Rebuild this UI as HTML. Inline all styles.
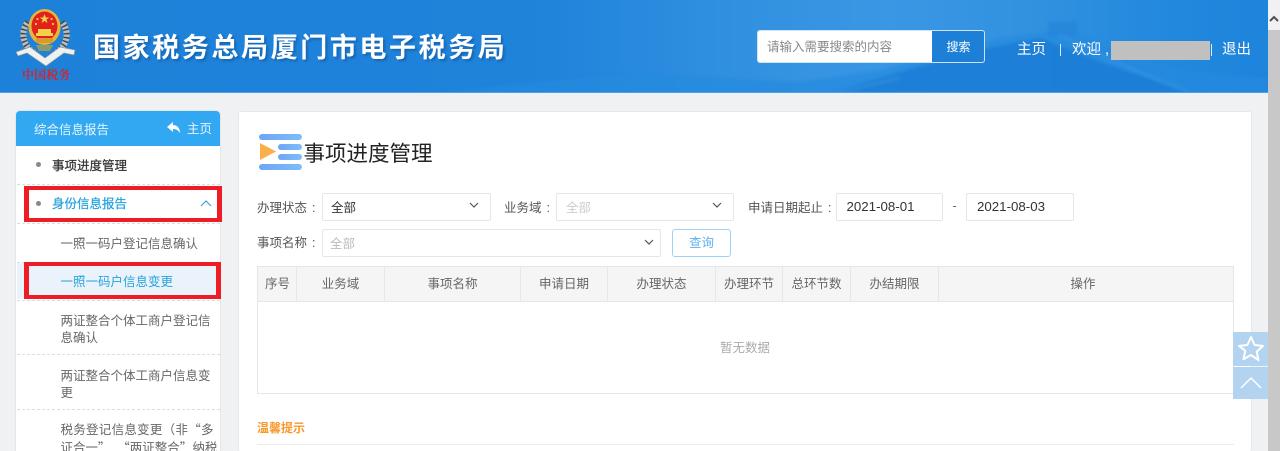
<!DOCTYPE html>
<html lang="zh"><head><meta charset="utf-8"><title>事项进度管理</title>
<style>
html,body{margin:0;padding:0;width:1280px;height:451px;overflow:hidden;background:#eff1f3}
body{position:relative;font-family:"Liberation Sans","Noto Sans CJK SC",sans-serif;font-size:12.5px;color:#555;filter:blur(.3px)}
.a{position:absolute;white-space:nowrap}
.box{position:absolute;box-sizing:border-box;background:#fff;border:1px solid #e6e6e6;border-radius:2px}
.th{position:absolute;top:267px;height:34px;line-height:34px;text-align:center;color:#666;border-right:1px solid #e6e6e6;box-sizing:border-box}
.dash{position:absolute;left:17px;width:203px;border-top:1px dashed #ddd}
.m{position:absolute;left:60.500px;width:153px;line-height:17px;color:#666;white-space:normal}
.c{margin-left:5px}
.q{font-family:"Noto Sans CJK SC",sans-serif}
.b{color:#333;-webkit-text-stroke:.25px currentColor}
</style></head><body>

<!-- header -->
<div class="a" style="left:0;top:0;width:1268px;height:93px;background:linear-gradient(90deg,#1e81d9 0,#1f83da 42%,#3190e0 58%,#3a97e4 70%,#3191e0 82%,#2088dd 93%,#1e84dc 100%);overflow:hidden">
<svg width="1268" height="93" style="position:absolute;left:0;top:0;filter:blur(1.500px)">
<path d="M440 93 L500 86 L560 80 L640 74 L720 78 L800 82 L880 70 L960 50 L1000 38 L1050 32 L1080 34 L1120 50 L1180 70 L1268 78 V93Z" fill="#258ade" opacity=".7"/>
<path d="M830 93 L900 72 L980 50 L1040 38 L1100 62 L1190 93Z" fill="#1a7cd4" opacity=".8"/>
<path d="M1048 22h29v14h-29z" fill="#2585d9" opacity=".8"/>
<path d="M1058 34 L1110 60 L1190 93" stroke="#3b98e4" stroke-width="3" fill="none" opacity=".55"/>
<path d="M836 93 L900 78" stroke="#3b98e4" stroke-width="3" fill="none" opacity=".5"/>
</svg></div>
<div class="a" style="left:0;top:92px;width:1268px;height:1px;background:#4ba0e6"></div>

<!-- emblem -->
<svg class="a" style="left:0;top:0" width="90" height="70" viewBox="0 0 90 70">
<path d="M28 22 C20 32 22 46 36 54" fill="none" stroke="#b7bec3" stroke-width="6"/>
<path d="M28 22 C20 32 22 46 36 54" fill="none" stroke="#3c4a4c" stroke-width="6" stroke-dasharray="1.500 2.500"/>
<path d="M62 22 C70 32 68 46 54 54" fill="none" stroke="#b7bec3" stroke-width="6"/>
<path d="M62 22 C70 32 68 46 54 54" fill="none" stroke="#3c4a4c" stroke-width="6" stroke-dasharray="1.500 2.500"/>
<ellipse cx="44.500" cy="27" rx="16" ry="18" fill="#e6b53c"/>
<ellipse cx="44.500" cy="26" rx="13" ry="14.500" fill="#e2201c"/>
<path d="M44.500 14l1.300 3.500h3.500l-2.900 2.100 1.100 3.500-3-2.200-3 2.200 1.100-3.500-2.900-2.100h3.500z" fill="#f4d04a"/>
<circle cx="37.500" cy="19" r="1.100" fill="#f4d04a"/><circle cx="51.500" cy="19" r="1.100" fill="#f4d04a"/><circle cx="36" cy="24" r="1.100" fill="#f4d04a"/><circle cx="53" cy="24" r="1.100" fill="#f4d04a"/>
<path d="M36 36h17v-3h-2v-4h-13v4h-2z" fill="#f4d04a"/>
<rect x="36" y="38" width="17" height="5" rx="1" fill="#d89a2c"/>
<path d="M36 45h17l-3 6h-11z" fill="#8c9a6a"/>
<path d="M16 52 L30 47 L45 58 L60 47 L75 50 L74 55 L64 53 L46 66 L27 53 L18 56Z" fill="#eef1f1" stroke="#8a9499" stroke-width=".7"/>
</svg>
<div class="a" style="left:22px;top:67px;font:bold 12px/16px 'Noto Serif CJK SC',serif;color:#d4232b;letter-spacing:.1px">中国税务</div>

<div class="a" style="left:93px;top:28px;font-size:27px;line-height:40px;font-weight:bold;color:#fff;letter-spacing:2.600px;text-shadow:2px 2px 2px rgba(10,60,120,.4)">国家税务总局厦门市电子税务局</div>

<!-- search -->
<div class="a" style="left:757px;top:30px;width:228px;height:33px;box-sizing:border-box;border:1px solid #cfe4f7;border-radius:3px;background:#fff;overflow:hidden">
<div class="a" style="left:9px;top:0;line-height:33px;color:#888">请输入需要搜索的内容</div>
<div class="a" style="left:174px;top:0;width:53px;height:32px;background:#1e7fd6;color:#fff;text-align:center;line-height:33px;font-size:12px">搜索</div></div>
<div class="a" style="left:1017px;top:41px;color:#fff;font-size:14.500px;line-height:18px">主页</div>
<div class="a" style="left:1060px;top:44px;width:1px;height:12px;background:#dcecfa"></div>
<div class="a" style="left:1072px;top:41px;color:#fff;font-size:14.500px;line-height:18px">欢迎 ,</div>
<div class="a" style="left:1111px;top:41px;width:99px;height:19px;background:#c0c0c0"></div>
<div class="a" style="left:1211px;top:44px;width:1px;height:12px;background:#dcecfa"></div>
<div class="a" style="left:1222px;top:41px;color:#fff;font-size:14.500px;line-height:18px">退出</div>

<!-- scrollbar -->
<div class="a" style="left:1268px;top:0;width:12px;height:451px;background:#c8c8c8"></div>
<div class="a" style="left:1268px;top:0;width:12px;height:30px;background:#f1f1f1"></div>
<svg class="a" style="left:1268px;top:12px" width="12" height="12"><path d="M2 9L6 5l4 4" stroke="#505050" stroke-width="2" fill="none"/></svg>

<!-- sidebar -->
<div class="a" style="left:16px;top:111px;width:204px;height:340px;background:#fff;box-shadow:0 0 0 1px #e4e7ea;border-radius:4px 4px 0 0"></div>
<div class="a" style="left:16px;top:111px;width:204px;height:35px;background:#33a8f2;border-radius:4px 4px 0 0"></div>
<div class="a" style="left:34px;top:112px;line-height:36px;color:#e8f5fe">综合信息报告</div>
<svg class="a" style="left:167px;top:122px" width="14" height="12"><path d="M6 0L0 5l6 5V7c3 0 5 1 7 4 0-5-3-8-7-8z" fill="#fff"/></svg>
<div class="a" style="left:187px;top:112px;line-height:35px;color:#e8f5fe">主页</div>

<div class="a" style="left:36px;top:162px;width:5px;height:5px;border-radius:50%;background:#888"></div>
<div class="a b" style="left:52px;top:157px;line-height:18px;color:#333">事项进度管理</div>
<div class="dash" style="top:184px"></div>
<div class="a" style="left:36px;top:201px;width:5px;height:5px;border-radius:50%;background:#888"></div>
<div class="a b" style="left:52px;top:195px;line-height:18px;color:#27a3dc">身份信息报告</div>
<svg class="a" style="left:199px;top:198px" width="14" height="10"><path d="M2 8l5-5 5 5" stroke="#3aa7dc" stroke-width="1.200" fill="none"/></svg>
<div class="dash" style="top:223px"></div>
<div class="m" style="top:236px">一照一码户登记信息确认</div>
<div class="dash" style="top:262px"></div>
<div class="a" style="left:17px;top:263px;width:203px;height:36px;background:#eaf3fb"></div>
<div class="m" style="top:274px;color:#27a3dc">一照一码户信息变更</div>
<div class="dash" style="top:300px"></div>
<div class="m" style="top:313px">两证整合个体工商户登记信息确认</div>
<div class="dash" style="top:354px"></div>
<div class="m" style="top:368px">两证整合个体工商户信息变更</div>
<div class="dash" style="top:409px"></div>
<div class="m" style="top:421px;line-height:16.500px"><div style="text-align:justify;text-align-last:justify;white-space:nowrap">税务登记信息变更<span class="q">（</span>非<span class="q">“</span>多</div><div style="white-space:nowrap">证合一<span class="q">”</span><span class="q" style="margin-left:13px">“</span>两证整合<span class="q">”</span>纳税</div></div>

<!-- red boxes -->
<div class="a" style="left:24px;top:186px;width:198px;height:36px;box-sizing:border-box;border:4px solid #ee1c25;border-width:4px 5px"></div>
<div class="a" style="left:24px;top:262px;width:197px;height:37px;box-sizing:border-box;border:4px solid #ee1c25;border-width:4px 5px"></div>

<!-- main -->
<div class="a" style="left:239px;top:112px;width:1012px;height:339px;background:#fff;box-shadow:0 0 0 1px #e6e8eb;border-radius:2px"></div>

<svg class="a" style="left:258px;top:133px" width="45" height="38">
<defs><linearGradient id="b" x1="0" x2="1"><stop offset="0" stop-color="#6ea5f5"/><stop offset="1" stop-color="#7fbcfb"/></linearGradient></defs>
<rect x="1" y="1" width="43" height="6" rx="3" fill="url(#b)"/>
<rect x="20" y="11" width="24" height="6" rx="3" fill="url(#b)"/>
<rect x="20" y="21" width="24" height="6" rx="3" fill="url(#b)"/>
<rect x="1" y="31" width="43" height="6" rx="3" fill="url(#b)"/>
<path d="M2 10L18 18.500 2 27Z" fill="#f9b04a"/></svg>
<div class="a" style="left:303.500px;top:139px;font-size:21.500px;line-height:30px;color:#222">事项进度管理</div>

<div class="a" style="left:257px;top:199px;line-height:18px">办理状态<span class="c">:</span></div>
<div class="box" style="left:322px;top:193px;width:169px;height:28px"></div>
<div class="a" style="left:331px;top:199px;line-height:18px;color:#333">全部</div>
<svg class="a" style="left:469px;top:202px" width="10" height="7"><path d="M1 1l4 4 4-4" stroke="#555" stroke-width="1.200" fill="none"/></svg>

<div class="a" style="left:504px;top:199px;line-height:18px">业务域<span class="c">:</span></div>
<div class="box" style="left:556px;top:193px;width:178px;height:28px"></div>
<div class="a" style="left:566px;top:199px;line-height:18px;color:#ccc">全部</div>
<svg class="a" style="left:712px;top:202px" width="10" height="7"><path d="M1 1l4 4 4-4" stroke="#555" stroke-width="1.200" fill="none"/></svg>

<div class="a" style="left:748px;top:199px;line-height:18px">申请日期起止<span class="c">:</span></div>
<div class="box" style="left:836px;top:193px;width:107px;height:28px"></div>
<div class="a" style="left:846.500px;top:198px;line-height:18px;color:#333;font-size:13.300px">2021-08-01</div>
<div class="a" style="left:952.500px;top:198px;line-height:16px;color:#666">-</div>
<div class="box" style="left:966px;top:193px;width:108px;height:28px"></div>
<div class="a" style="left:977px;top:198px;line-height:18px;color:#333;font-size:13.300px">2021-08-03</div>

<div class="a" style="left:257px;top:234px;line-height:18px">事项名称<span class="c">:</span></div>
<div class="box" style="left:322px;top:229px;width:339px;height:28px"></div>
<div class="a" style="left:330px;top:235px;line-height:18px;color:#bbb">全部</div>
<svg class="a" style="left:644px;top:239px" width="10" height="7"><path d="M1 1l4 4 4-4" stroke="#555" stroke-width="1.200" fill="none"/></svg>
<div class="a" style="left:672px;top:229px;width:59px;height:28px;box-sizing:border-box;border:1px solid #9fd0f6;border-radius:3px;text-align:center;line-height:26px;color:#5fb2ee">查询</div>

<!-- table -->
<div class="a" style="left:257px;top:266px;width:977px;height:128px;box-sizing:border-box;border:1px solid #e6e6e6;background:#fff"></div>
<div class="a" style="left:258px;top:267px;width:975px;height:34px;background:#f5f5f5;border-bottom:1px solid #e6e6e6"></div>
<div class="th" style="left:258px;width:39px;padding-left:1px">序号</div>
<div class="th" style="left:297px;width:88px">业务域</div>
<div class="th" style="left:385px;width:136px">事项名称</div>
<div class="th" style="left:521px;width:87px">申请日期</div>
<div class="th" style="left:608px;width:108px">办理状态</div>
<div class="th" style="left:716px;width:67px">办理环节</div>
<div class="th" style="left:783px;width:68px">总环节数</div>
<div class="th" style="left:851px;width:88px">办结期限</div>
<div class="th" style="left:939px;width:288px;border-right:0">操作</div>
<div class="a" style="left:720px;top:339px;line-height:18px;color:#aaa">暂无数据</div>

<div class="a" style="left:257px;top:419px;line-height:18px;color:#f8982a;font-weight:bold;font-size:12px">温馨提示</div>
<div class="a" style="left:257px;top:444px;width:977px;height:1px;background:#ececec"></div>

<!-- float buttons -->
<div class="a" style="left:1233px;top:332px;width:35px;height:34px;background:#b3d3f0"></div>
<svg class="a" style="left:1236px;top:334px" width="30" height="30"><path d="M15 3l3.600 8 8.400.9-6.300 5.800 1.800 8.500L15 21l-7.500 4.200 1.800-8.500L3 11.900l8.400-.9z" fill="none" stroke="#fff" stroke-width="2" stroke-linejoin="round"/></svg>
<div class="a" style="left:1233px;top:367px;width:35px;height:32px;background:#b3d3f0"></div>
<svg class="a" style="left:1236px;top:370px" width="30" height="24"><path d="M5 18L15 8l10 10" fill="none" stroke="#fff" stroke-width="1.500"/></svg>

</body></html>
